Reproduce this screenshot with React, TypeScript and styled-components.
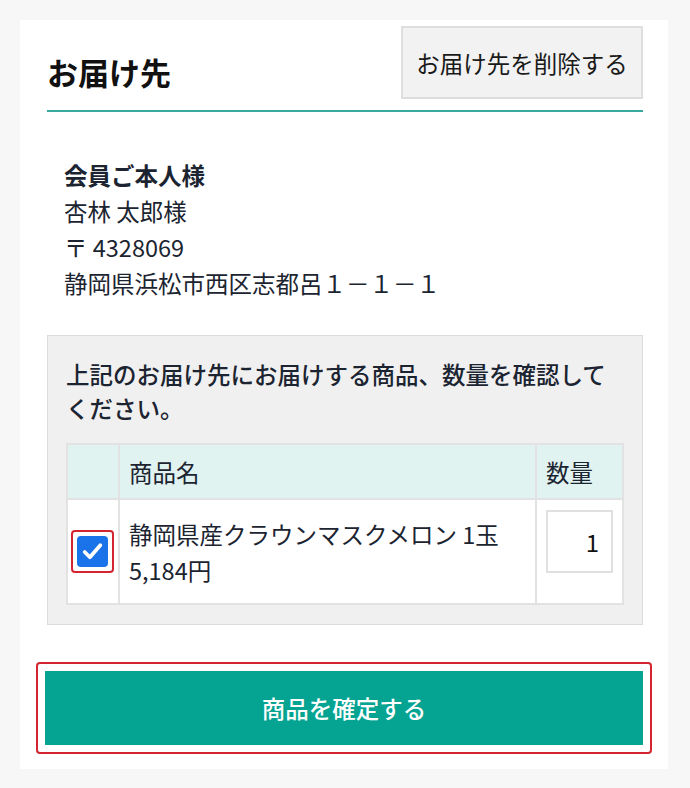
import React from "react";
import styled, { createGlobalStyle } from "styled-components";

const Global = createGlobalStyle`
  html, body { margin: 0; padding: 0; background: #f7f7f7; }
  body { font-family: "Noto Sans CJK JP", "Noto Sans", sans-serif; color: #1b2430; }
  * { box-sizing: border-box; }
`;

const Page = styled.div`
  padding: 20px;
  width: 690px;
`;

const Card = styled.div`
  background: #fff;
  width: 648px;
  padding: 6px 25px 15px 27px;
  display: flex;
  flex-direction: column;
`;

const Header = styled.div`
  display: flex;
  justify-content: space-between;
  align-items: flex-end;
  border-bottom: 2px solid #3aa99d;
  padding-bottom: 11px;
`;

const Title = styled.h2`
  margin: 0 0 9px 0;
  font-size: 31px;
  font-weight: 700;
  line-height: 36px;
  color: #111;
`;

const DeleteButton = styled.button`
  width: 242px;
  height: 73px;
  background: #f2f2f2;
  border: 2px solid #dedede;
  font-family: inherit;
  font-size: 23.5px;
  color: #1a1a1a;
  padding: 0;
`;

const Address = styled.div`
  padding: 45px 0 0 17px;
  font-size: 23.5px;
  line-height: 36px;
`;

const Line = styled.div<{ $bold?: boolean }>`
  font-weight: ${(p) => (p.$bold ? 700 : 400)};
`;

const ConfirmBox = styled.div`
  margin-top: 34px;
  background: #f0f0f0;
  border: 1px solid #dcdcdc;
  padding: 21px 18px 19px 18px;
`;

const Notice = styled.p`
  margin: 0 0 18px 0;
  font-size: 23.5px;
  line-height: 34px;
  font-weight: 500;
  color: #1b2430;
`;

const Table = styled.table`
  width: 100%;
  border-collapse: collapse;
  background: #fff;
  font-size: 23.5px;
`;

const Th = styled.th<{ $w?: number }>`
  background: #e1f3f1;
  border: 2px solid #e2e2e2;
  height: 55px;
  text-align: left;
  font-weight: 400;
  padding: 0 9px;
  width: ${(p) => (p.$w ? `${p.$w}px` : "auto")};
  color: #1b2430;
`;

const Td = styled.td`
  border: 2px solid #e2e2e2;
  height: 105px;
  padding: 0 9px;
  line-height: 36px;
  vertical-align: middle;
`;

const CheckTd = styled.td`
  border: 2px solid #e2e2e2;
  padding: 0;
  text-align: center;
  vertical-align: middle;
`;

const CheckFrame = styled.span`
  display: inline-flex;
  align-items: center;
  justify-content: center;
  width: 43px;
  height: 43px;
  border: 2.5px solid #d4242f;
  border-radius: 4px;
  vertical-align: middle;
  margin-left: -2px;
`;

const CheckBox = styled.span`
  display: flex;
  align-items: center;
  justify-content: center;
  width: 31px;
  height: 31px;
  background: #1a73e8;
  border-radius: 4px;
`;

const QtyTd = styled.td`
  border: 2px solid #e2e2e2;
  padding: 10px 9px 0 9px;
  vertical-align: top;
`;

const QtyInput = styled.input`
  width: 67px;
  height: 63px;
  border: 2px solid #e0e0e0;
  font-family: inherit;
  font-size: 24px;
  text-align: right;
  padding: 0 12px;
  color: #111;
  background: #fff;
`;

const SubmitFrame = styled.div`
  margin: 37px -9px 0 -11px;
  border: 2.5px solid #d4242f;
  border-radius: 4px;
  padding: 7px;
`;

const SubmitButton = styled.button`
  width: 100%;
  height: 74px;
  background: #05a391;
  border: none;
  color: #fff;
  font-family: inherit;
  font-size: 23.5px;
  font-weight: 500;
`;

export default function App() {
  return (
    <>
      <Global />
      <Page>
        <Card>
          <Header>
            <Title>お届け先</Title>
            <DeleteButton>お届け先を削除する</DeleteButton>
          </Header>
          <Address>
            <Line $bold>会員ご本人様</Line>
            <Line>杏林 太郎様</Line>
            <Line>〒 4328069</Line>
            <Line>静岡県浜松市西区志都呂１－１－１</Line>
          </Address>
          <ConfirmBox>
            <Notice>上記のお届け先にお届けする商品、数量を確認してください。</Notice>
            <Table>
              <thead>
                <tr>
                  <Th $w={52}></Th>
                  <Th>商品名</Th>
                  <Th $w={87}>数量</Th>
                </tr>
              </thead>
              <tbody>
                <tr>
                  <CheckTd>
                    <CheckFrame>
                      <CheckBox>
                        <svg width="25" height="25" viewBox="0 0 24 24">
                          <path d="M4.5 12.5 L9.5 17.5 L19.5 6" fill="none" stroke="#fff" strokeWidth="3.6" strokeLinecap="round" strokeLinejoin="round" />
                        </svg>
                      </CheckBox>
                    </CheckFrame>
                  </CheckTd>
                  <Td>
                    静岡県産クラウンマスクメロン 1玉
                    <br />
                    5,184円
                  </Td>
                  <QtyTd>
                    <QtyInput defaultValue="1" />
                  </QtyTd>
                </tr>
              </tbody>
            </Table>
          </ConfirmBox>
          <SubmitFrame>
            <SubmitButton>商品を確定する</SubmitButton>
          </SubmitFrame>
        </Card>
      </Page>
    </>
  );
}
